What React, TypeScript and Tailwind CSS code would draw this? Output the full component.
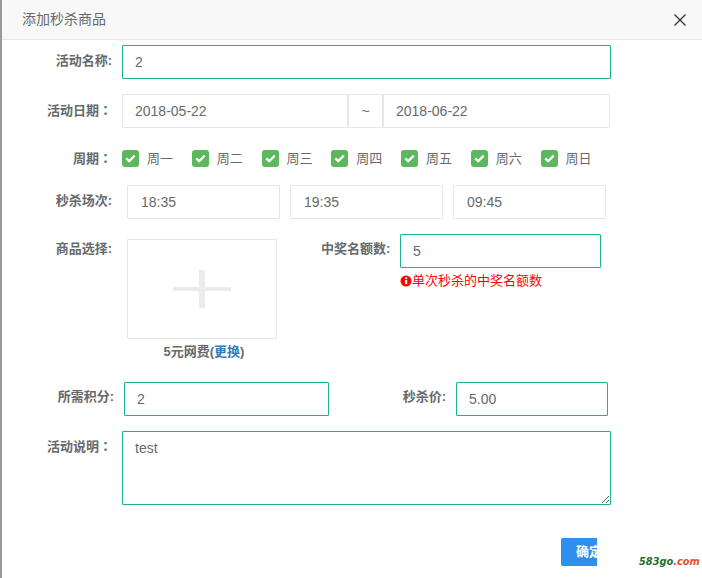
import React from 'react';

const SANS = "font-['Liberation_Sans','Noto_Sans_CJK_SC',sans-serif]";
const days = ['周一', '周二', '周三', '周四', '周五', '周六', '周日'];
const sessions = ['18:35', '19:35', '09:45'];

// wide: full-width colon, centred in its cell like the reference
const Label: React.FC<{ text: string; wide?: boolean; className?: string }> = ({ text, wide, className }) => (
  <label className={`shrink-0 text-right text-[13px] leading-[18px] font-bold text-[#676a6c] ${className ?? ''}`}>
    {text}
    {wide && <span className="font-['Noto_Sans_CJK_TC',sans-serif]">：</span>}
  </label>
);

const Field: React.FC<{ value: string; active?: boolean; className?: string }> = ({ value, active, className }) => (
  <input
    readOnly
    value={value}
    className={`block h-[34px] rounded-[1px] border bg-white px-3 text-[14px] text-[#676a6c] outline-none ${
      active ? 'border-[#1ab394]' : 'border-[#e5e6e7]'
    } ${className ?? ''}`}
  />
);

const App: React.FC = () => {
  return (
    <div className={`relative flex h-[578px] w-[702px] overflow-hidden bg-white ${SANS}`}>
      <div className="w-[2px] shrink-0 bg-[#9a9a9a]" />
      <div className="w-[700px]">
        <header className="flex h-[40px] items-center justify-between border-b border-[#e9e9e9] bg-[#f8f8f8] pr-[16px] pl-[20px]">
          <h4 className="text-[14px] text-[#676a6c]">添加秒杀商品</h4>
          <svg width="12" height="12" viewBox="0 0 12 12" className="text-[#333]">
            <path d="M0.5 0.5L11.5 11.5M11.5 0.5L0.5 11.5" stroke="currentColor" strokeWidth="1.3" fill="none" />
          </svg>
        </header>

        <form className="pt-[5px]">
          <div className="flex">
            <Label text="活动名称:" className="w-[110px] pt-[7px]" />
            <Field value="2" active className="ml-[10px] w-[489px]" />
          </div>

          <div className="mt-[15px] flex">
            <Label text="活动日期" wide className="w-[110px] pt-[7px]" />
            <div className="ml-[10px] flex w-[488px]">
              <Field value="2018-05-22" className="w-[226px]" />
              <div className="flex h-[34px] w-[35px] items-center justify-center border border-[#e5e6e7] bg-white text-[14px] text-[#676a6c]">
                ~
              </div>
              <Field value="2018-06-22" className="w-[227px]" />
            </div>
          </div>

          <div className="mt-[22px] flex h-[17px] items-center">
            <Label text="周期" wide className="w-[110px]" />
            <div className="ml-[10px] flex">
              {days.map((d) => (
                <div key={d} className="flex w-[69.75px] items-center">
                  <span className="flex h-[17px] w-[17px] items-center justify-center rounded-[3px] bg-[#5cb85c]">
                    <svg width="11" height="9" viewBox="0 0 11 9">
                      <path d="M1.3 4.4L4.2 7.2L9.7 1.6" stroke="#fff" strokeWidth="2.3" fill="none" />
                    </svg>
                  </span>
                  <span className="ml-[8px] text-[13px] leading-[17px] text-[#676a6c]">{d}</span>
                </div>
              ))}
            </div>
          </div>

          <div className="mt-[18px] flex">
            <Label text="秒杀场次:" className="w-[110px] pt-[7px]" />
            <div className="ml-[15px] flex gap-[10px]">
              {sessions.map((s) => (
                <Field key={s} value={s} className="w-[153px] pl-[13px]" />
              ))}
            </div>
          </div>

          <div className="mt-[20px] flex h-[128px]">
            <Label text="商品选择:" className="w-[110px] pt-[1px]" />
            <div className="ml-[15px] w-[150px]">
              <div className="flex h-[100px] w-[150px] items-center justify-center border border-[#e5e6e7]">
                <svg width="58" height="38" viewBox="0 0 58 38">
                  <rect x="0" y="17" width="58" height="4" fill="#ebebeb" />
                  <rect x="26" y="0" width="6" height="38" fill="#ebebeb" />
                </svg>
              </div>
              <p className="mt-[4px] pl-[4px] text-center text-[13px] leading-[18px] font-bold whitespace-nowrap text-[#676a6c]">
                5元网费(<a className="text-[#337ab7]">更换</a>)
              </p>
            </div>
            <div className="ml-[44px] flex -translate-y-[5px]">
              <Label text="中奖名额数:" className="w-[69px] pt-[6px] whitespace-nowrap" />
              <div className="ml-[10px]">
                <Field value="5" active className="w-[201px]" />
                <p className="mt-[4px] flex items-center text-[13px] leading-[18px] text-[#ff0000]">
                  <svg width="12" height="12" viewBox="0 0 12 12">
                    <circle cx="6" cy="6" r="5.5" fill="#ff0000" />
                    <rect x="5" y="5" width="2.2" height="4" fill="#fff" />
                    <rect x="5" y="2.4" width="2.2" height="1.7" fill="#fff" />
                  </svg>
                  单次秒杀的中奖名额数
                </p>
              </div>
            </div>
          </div>

          <div className="mt-[15px] flex">
            <Label text="所需积分:" className="w-[112px] pt-[6px]" />
            <Field value="2" active className="ml-[10px] w-[205px]" />
            <Label text="秒杀价:" className="w-[117px] pt-[6px]" />
            <Field value="5.00" active className="ml-[10px] w-[152px]" />
          </div>

          <div className="mt-[15px] flex">
            <Label text="活动说明" wide className="w-[110px] pt-[6px]" />
            <textarea
              readOnly
              value="test"
              className="ml-[10px] block h-[74px] w-[489px] rounded-[1px] border border-[#1ab394] px-3 py-[6px] text-[14px] leading-[20px] text-[#676a6c] outline-none"
            />
          </div>

          <div className="mt-[33px] ml-[559px] h-[28px] w-[36px] overflow-hidden">
            <button
              type="button"
              className="h-[28px] w-[58px] rounded-[2px] bg-[#2f8fec] pl-[15px] text-left text-[13px] font-bold whitespace-nowrap text-white"
            >
              确定
            </button>
          </div>
        </form>
      </div>

      <div className="absolute top-[554px] left-[639px] font-['DejaVu_Sans',sans-serif] text-[9.8px] leading-[16px] font-bold whitespace-nowrap italic">
        <span className="text-[#1b6e2c]">583go</span>
        <span className="text-[#e8502a]">.com</span>
      </div>
    </div>
  );
};

export default App;
